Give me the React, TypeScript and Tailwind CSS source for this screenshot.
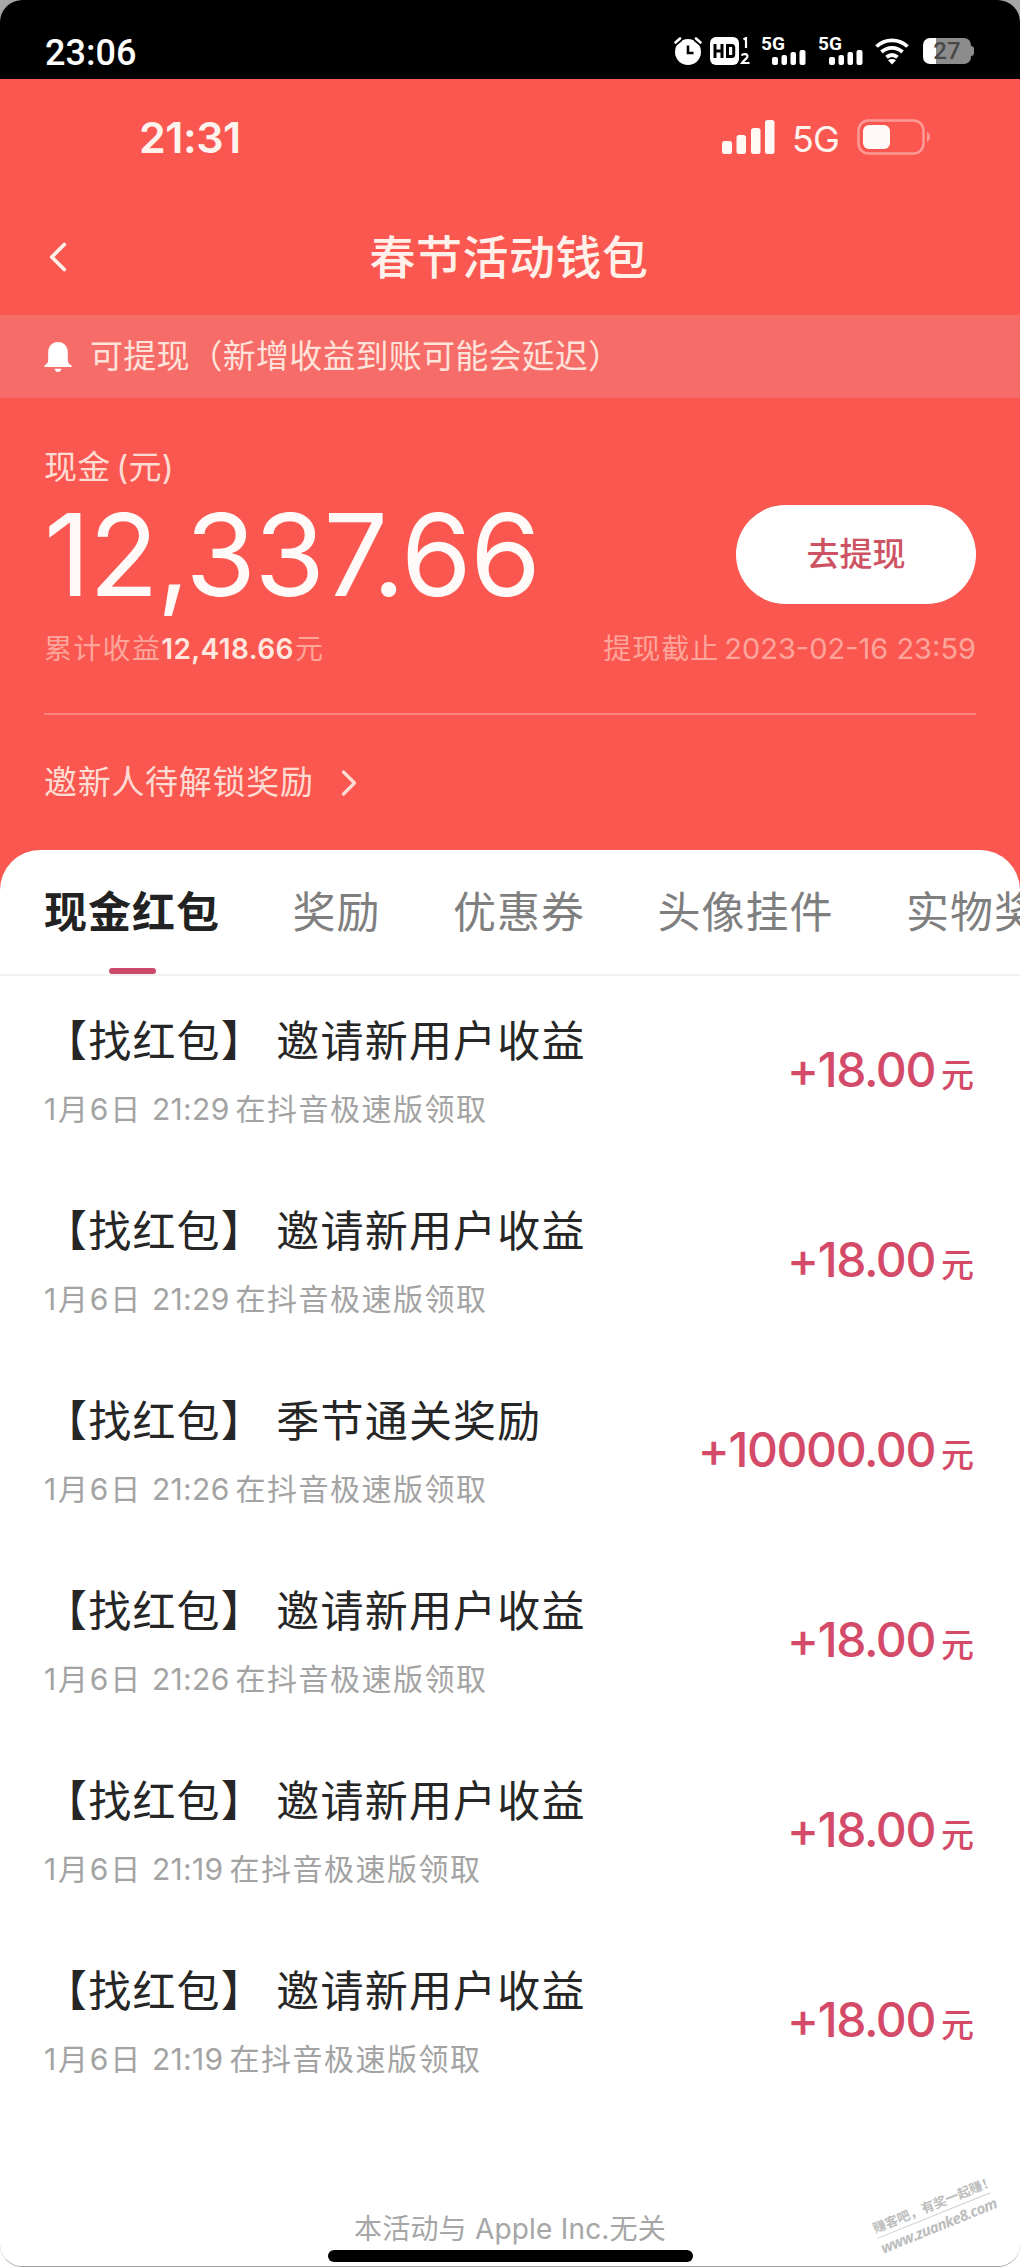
import { ChevronLeft, ChevronRight } from 'lucide-react';

interface IncomeRecord {
  id: number;
  title: string;
  time: string;
  amount: string;
}

const tabs = ['现金红包', '奖励', '优惠券', '头像挂件', '实物奖'];

const records: IncomeRecord[] = [
  { id: 1, title: '邀请新用户收益', time: '21:29', amount: '18.00' },
  { id: 2, title: '邀请新用户收益', time: '21:29', amount: '18.00' },
  { id: 3, title: '季节通关奖励', time: '21:26', amount: '10000.00' },
  { id: 4, title: '邀请新用户收益', time: '21:26', amount: '18.00' },
  { id: 5, title: '邀请新用户收益', time: '21:19', amount: '18.00' },
  { id: 6, title: '邀请新用户收益', time: '21:19', amount: '18.00' },
];

function AlarmIcon() {
  return (
    <svg width="28" height="28" viewBox="0 0 28 28" fill="none">
      <circle cx="14" cy="15" r="13" fill="#fff" />
      <path d="M1 6 6.500 1.500M27 6 21.500 1.500" stroke="#000" strokeWidth="6" />
      <path d="M1.500 5.500 6 1.500M26.500 5.500 22 1.500" stroke="#fff" strokeWidth="2.600" strokeLinecap="round" />
      <path d="M14 8.500V16h5.500" stroke="#000" strokeWidth="2.600" />
    </svg>
  );
}

function HdIcon() {
  return (
    <svg width="41" height="28" viewBox="0 0 41 28" fill="none">
      <rect width="29" height="28" rx="6" fill="#fff" />
      <path d="M5 7v14M12 7v14M5 14h7" stroke="#000" strokeWidth="3" />
      <path d="M17.500 8.500h4.200a2 2 0 0 1 2 2v7a2 2 0 0 1-2 2h-4.200z" stroke="#000" strokeWidth="3" />
      <path d="M33.500 2.500 36 1v10" stroke="#fff" strokeWidth="2.200" />
      <path d="M31.500 18.500c1.500-2.200 6.500-1.800 6 1-.3 2-3.500 3.500-5.500 6.500h7.500" stroke="#fff" strokeWidth="2.200" />
    </svg>
  );
}

function MobileSignal() {
  return (
    <div className="relative h-7 w-[45px]">
      <span className="absolute -top-px left-0 font-['Roboto',sans-serif] text-[19px] leading-[16px] font-bold">5G</span>
      <svg className="absolute right-0 bottom-0" width="34" height="15" viewBox="0 0 34 15" fill="#fff">
        <rect x="0" y="7" width="6" height="8" rx="2" />
        <rect x="9.500" y="5" width="5.500" height="10" rx="2" />
        <rect x="18.500" y="2" width="5.500" height="13" rx="2" />
        <rect x="27.500" y="0" width="6" height="15" rx="2" />
      </svg>
    </div>
  );
}

function WifiIcon() {
  return (
    <svg width="34" height="27" viewBox="0 0 34 27" fill="none" stroke="#fff" strokeWidth="3.800">
      <path d="M1.500 8.500C10 .2 24 .2 32.500 8.500" />
      <path d="M6.500 14c6-5.600 15-5.600 21 0" />
      <path d="M11.500 19.300c3.400-2.900 7.600-2.900 11 0" />
      <path d="M17 26.500l-4-4.300c2.400-1.700 5.600-1.700 8 0z" fill="#fff" stroke="none" />
    </svg>
  );
}

function BellIcon() {
  return (
    <svg width="28" height="30" viewBox="0 0 28 30" fill="#fff">
      <path d="M14 0C8 0 4.200 4.600 4.200 10.500v7.500c0 2.500-1 3.800-3.400 5.200-1 .6-.8 1.800.4 1.800h25.600c1.200 0 1.400-1.200.4-1.800-2.400-1.400-3.400-2.700-3.400-5.200v-7.500C23.800 4.600 20 0 14 0z" />
      <path d="M10.500 26.800h7c-.4 1.900-1.700 3.200-3.500 3.200s-3.100-1.300-3.500-3.200z" />
    </svg>
  );
}

function StatusBar() {
  return (
    <div className="flex h-[79px] items-start bg-black pr-[46px] pl-[45px] text-white">
      <span className="pt-[33px] font-['Roboto',sans-serif] text-[36px] leading-[40px] font-medium">23:06</span>
      <div className="mt-[37px] ml-auto flex h-7 items-center">
        <AlarmIcon />
        <div className="ml-[8px]">
          <HdIcon />
        </div>
        <div className="ml-[10px]">
          <MobileSignal />
        </div>
        <div className="ml-[12px]">
          <MobileSignal />
        </div>
        <div className="ml-[12px]">
          <WifiIcon />
        </div>
        <div className="ml-[14px] flex items-center">
          <div className="flex h-[26px] w-[48px] items-center justify-center rounded-[7px] bg-[linear-gradient(to_right,#fff_13px,#8c8c8c_13px)] font-['Roboto',sans-serif] text-[24px] leading-none font-medium text-[#484848]">
            27
          </div>
          <div className="h-[10px] w-[3px] rounded-r-sm bg-[#8c8c8c]"></div>
        </div>
      </div>
    </div>
  );
}

function InnerStatusBar() {
  return (
    <div className="flex h-[116px] items-center pr-[88px] pl-[139px] text-[#fff3ee]">
      <span className="text-[43px] font-semibold tracking-[-0.5px]">21:31</span>
      <div className="ml-auto flex items-center">
        <svg width="53" height="34" viewBox="0 0 53 34" fill="#fff8f4">
          <rect x="0" y="21" width="10" height="13" rx="2.500" />
          <rect x="14.500" y="15" width="9.500" height="19" rx="2.500" />
          <rect x="29" y="8" width="9.500" height="26" rx="2.500" />
          <rect x="43" y="0" width="9.500" height="34" rx="2.500" />
        </svg>
        <span className="ml-[17px] w-[50px] pt-[3px] text-[36px] leading-[40px] tracking-[-1px]">5G</span>
        <svg className="ml-[15px]" width="75" height="36" viewBox="0 0 75 36" fill="none">
          <rect x="1.500" y="1.500" width="65" height="33" rx="10" stroke="#fd9a95" strokeWidth="2.500" />
          <rect x="6" y="6" width="27" height="24" rx="6" fill="#fffaf7" />
          <path d="M70 13c4 1.500 4 8.500 0 10z" fill="#fd9a95" />
        </svg>
      </div>
    </div>
  );
}

function RecordRow({ record }: { record: IncomeRecord }) {
  return (
    <div className="flex h-[190px] items-start justify-between pr-[46px] pl-[44px]">
      <div>
        <h3 className="mt-[41px] text-[43px] leading-[48px] tracking-[1.2px] whitespace-pre text-[#262626] [word-spacing:-2px]">
          【找红包】 {record.title}
        </h3>
        <p className="mt-6 flex text-[30px] leading-[40px] text-[#a3a3a3]">
          <span className="w-[108px] tracking-[1.8px] whitespace-nowrap">1月6日</span>
          <span className="tracking-[0.3px]">{record.time}</span>
          <span className="ml-[6px] tracking-[1.5px]">在抖音极速版领取</span>
        </p>
      </div>
      <div className="flex items-baseline pt-[64px] text-[#d44b69]">
        <span className="text-[48px] leading-[60px] font-medium tracking-[-1.4px]">+{record.amount}</span>
        <span className="ml-[6px] text-[33px] font-medium">元</span>
      </div>
    </div>
  );
}

function Watermark() {
  return (
    <div className="absolute top-[2196px] left-[873px] w-[122px] rotate-[-22deg] text-center leading-none whitespace-nowrap text-[#bdbdbd]">
      <div className="text-[13px] leading-[19px] font-bold">赚客吧，有奖一起赚！</div>
      <div className="border-t border-[#cfcfcf] font-['Open_Sans',sans-serif] text-[15px] leading-[20px] font-bold tracking-[-0.6px] italic">
        www.zuanke8.com
      </div>
    </div>
  );
}

export default function App() {
  return (
    <div className="h-[2267px] w-[1020px] bg-[linear-gradient(#a6a6a6_50%,#fff_50%)] font-['Inter','Noto_Sans_CJK_SC',sans-serif]">
      <div className="relative h-[2267px] overflow-hidden rounded-[22px] border-b border-[#a0a0a0] bg-white">
        <StatusBar />

        <div className="bg-[#fa5751]">
          <InnerStatusBar />

          {/* Title */}
          <div className="flex h-[120px] items-center px-[44px] pt-[4px] text-[#fff0ea]">
            <button className="w-[60px]">
              <ChevronLeft className="-ml-[11px]" size={50} strokeWidth={1.8} />
            </button>
            <h1 className="flex-1 text-center text-[46px] leading-none font-medium tracking-[0.5px]">春节活动钱包</h1>
            <div className="w-[62px]"></div>
          </div>

          {/* Notice */}
          <div className="flex h-[83px] items-center bg-[#f66c69] pl-[44px] text-[#ffe2d9]">
            <BellIcon />
            <span className="ml-[18px] text-[33px] leading-none tracking-[0.2px]">可提现（新增收益到账可能会延迟）</span>
          </div>

          {/* Balance */}
          <div className="px-[44px] pt-[47px]">
            <div className="text-[33px] leading-[44px] tracking-[0.3px] text-[#ffdcd3] [word-spacing:-4px]">现金 (元)</div>
            <div className="flex h-[131px] items-center justify-between">
              <span className="text-[114px] leading-[131px] font-normal tracking-[-1.4px] text-[#fffaf7]">12,337.66</span>
              <button className="h-[99px] w-[240px] rounded-full bg-white text-[33px] font-medium text-[#cd5363]">
                去提现
              </button>
            </div>
            <div className="flex h-[58px] items-center justify-between text-[28px] text-[#fda59b]">
              <div className="flex items-center">
                <span className="tracking-[1.3px]">累计收益</span>
                <span className="font-semibold tracking-[0.4px] text-[#ffe6de]">12,418.66</span>
                <span className="ml-px">元</span>
              </div>
              <div className="flex items-center">
                <span className="tracking-[1px]">提现截止</span>
                <span className="ml-[5px] text-[29px]">2023-02-16 23:59</span>
              </div>
            </div>
            <div className="mt-[35px] h-[2px] bg-[#fc8580]"></div>
            <div className="flex h-[135px] items-center text-[33px] text-[#ffdcd3]">
              <span className="tracking-[0.7px]">邀新人待解锁奖励</span>
              <ChevronRight className="ml-[13px]" size={44} strokeWidth={1.8} />
            </div>
          </div>

          {/* Tabs */}
          <div className="flex h-[126px] gap-[72.5px] overflow-hidden rounded-t-[40px] border-b-2 border-[#f1f1f1] bg-white pl-[44px] text-[43px] leading-[124px] tracking-[1px] whitespace-nowrap text-[#7f7f7f]">
            {tabs.map((tab, index) => (
              <div key={tab} className={index === 0 ? 'relative font-bold text-[#222]' : ''}>
                {tab}
                {index === 0 && (
                  <div className="absolute bottom-0 left-[65px] h-[6px] w-[47px] rounded-full bg-[#cb4a69]"></div>
                )}
              </div>
            ))}
          </div>
        </div>

        {records.map((record) => (
          <RecordRow key={record.id} record={record} />
        ))}

        <div className="mt-[98px] text-center text-[28px] leading-[30px] tracking-[0.2px] text-[#a6a6a6]">
          本活动与 Apple Inc.无关
        </div>
        <div className="mx-auto mt-[6px] h-[12px] w-[365px] rounded-full bg-black"></div>

        <Watermark />
      </div>
    </div>
  );
}
